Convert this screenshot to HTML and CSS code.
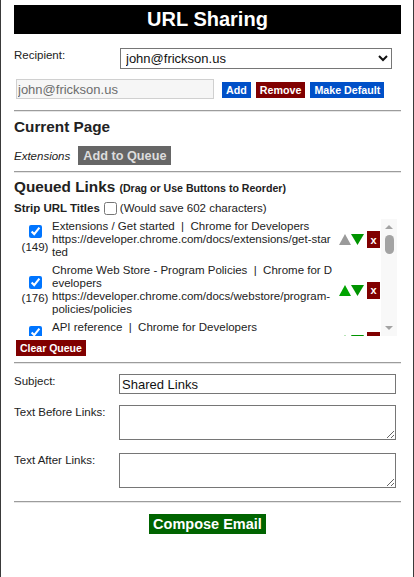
FILE: index.html
```html
<!DOCTYPE html>
<html>
<head>
<meta charset="utf-8">
<title>URL Sharing</title>
<link rel="stylesheet" href="styles.css">
</head>
<body>
<div class="page">
  <h1 class="title">URL Sharing</h1>

  <div class="recipient-row">
    <label class="lbl">Recipient:</label>
    <select class="sel"><option>john@frickson.us</option></select>
  </div>

  <div class="email-row">
    <input class="email" type="text" value="john@frickson.us" disabled>
    <button class="btn blue">Add</button>
    <button class="btn red">Remove</button>
    <button class="btn blue">Make Default</button>
  </div>

  <hr class="rule">

  <h2 class="section">Current Page</h2>
  <div class="current-row">
    <span class="page-name">Extensions</span>
    <button class="btn-queue">Add to Queue</button>
  </div>

  <hr class="rule r2">

  <h2 class="section q">Queued Links <span class="hint">(Drag or Use Buttons to Reorder)</span></h2>
  <div class="strip-row"><b>Strip URL Titles</b><input type="checkbox"><span>(Would save 602 characters)</span></div>

  <div class="list">
    <div class="list-body">
      <div class="item">
        <div class="chk"><input type="checkbox" checked><span class="count">(149)</span></div>
        <div class="txt">Extensions / Get started &nbsp;|&nbsp; Chrome for Developers<br>https://developer.chrome.com/docs/extensions/get-started</div>
        <div class="ctrls">
          <svg class="tri" width="12" height="11" viewBox="0 0 12 11"><polygon points="6,0 12,11 0,11" fill="#9a9a9a"/></svg>
          <svg class="tri" width="13" height="11" viewBox="0 0 13 11"><polygon points="0,0 13,0 6.5,11" fill="#009400"/></svg>
          <span class="del">x</span>
        </div>
      </div>
      <div class="item">
        <div class="chk"><input type="checkbox" checked><span class="count">(176)</span></div>
        <div class="txt">Chrome Web Store - Program Policies &nbsp;|&nbsp; Chrome for Developers<br>https://developer.chrome.com/docs/webstore/program-policies/policies</div>
        <div class="ctrls">
          <svg class="tri" width="12" height="11" viewBox="0 0 12 11"><polygon points="6,0 12,11 0,11" fill="#00a400"/></svg>
          <svg class="tri" width="13" height="11" viewBox="0 0 13 11"><polygon points="0,0 13,0 6.5,11" fill="#009400"/></svg>
          <span class="del">x</span>
        </div>
      </div>
      <div class="item">
        <div class="chk"><input type="checkbox" checked><span class="count">(121)</span></div>
        <div class="txt">API reference &nbsp;|&nbsp; Chrome for Developers<br>https://developer.chrome.com/docs/extensions/reference/api</div>
        <div class="ctrls">
          <svg class="tri" width="12" height="11" viewBox="0 0 12 11"><polygon points="6,0 12,11 0,11" fill="#00a400"/></svg>
          <svg class="tri" width="13" height="11" viewBox="0 0 13 11"><polygon points="0,0 13,0 6.5,11" fill="#009400"/></svg>
          <span class="del">x</span>
        </div>
      </div>
    </div>
    <div class="sbar">
      <span class="sb-up"></span>
      <span class="sb-thumb"></span>
      <span class="sb-space"></span>
      <span class="sb-down"></span>
    </div>
  </div>

  <div class="clear-wrap"><button class="btn-clear">Clear Queue</button></div>

  <hr class="rule r3">

  <div class="form">
    <div class="frow">
      <label class="flbl">Subject:</label>
      <input class="subject" type="text" value="Shared Links">
    </div>
    <div class="frow f2">
      <label class="flbl">Text Before Links:</label>
      <textarea class="area"></textarea>
    </div>
    <div class="frow f3">
      <label class="flbl">Text After Links:</label>
      <textarea class="area"></textarea>
    </div>
  </div>

  <hr class="rule r4">

  <div class="compose-wrap"><button class="compose">Compose Email</button></div>
</div>
</body>
</html>
```

FILE: styles.css
```css
html, body {
  margin: 0;
  padding: 0;
}

body {
  font-family: "Liberation Sans", Arial, sans-serif;
  font-size: 11.5px;
  color: #222;
  background: #fff;
  border-left: 1px solid #3a3a3a;
  border-right: 1px solid #3a3a3a;
  height: 577px;
  box-sizing: border-box;
  overflow: hidden;
}

.page {
  padding: 5px 12px 0 13px;
}

.title {
  margin: 0;
  background: #000;
  color: #fff;
  font-size: 20px;
  font-weight: bold;
  text-align: center;
  height: 29px;
  line-height: 29px;
}

.recipient-row {
  display: flex;
  align-items: flex-start;
  margin-top: 14px;
}

.lbl {
  width: 106px;
  line-height: 14px;
}

.sel {
  width: 272px;
  height: 21px;
  font: 13px "Liberation Sans", Arial, sans-serif;
  color: #111;
  border: 1px solid #767676;
  border-radius: 0;
  background: #fff;
  padding: 0 1px;
  margin: 0;
}

.email-row {
  display: flex;
  align-items: center;
  margin-top: 10px;
  padding-left: 2px;
}

.email {
  width: 198px;
  height: 20px;
  box-sizing: border-box;
  font: 13px "Liberation Sans", Arial, sans-serif;
  color: #6d6d6d;
  background: #f6f6f6;
  border: 1px solid #d0d0d0;
  border-radius: 0;
  padding: 0 1px;
  margin: 0 8px 0 0;
}

.btn {
  font: bold 10.7px "Liberation Sans", Arial, sans-serif;
  color: #fff;
  border: 0;
  border-radius: 0;
  height: 16px;
  padding: 0 4px;
  margin: 1px 5px 0 0;
}

.blue { background: #0050c8; }
.red { background: #800000; }

.rule {
  border: 0;
  border-top: 1px solid #9c9c9c;
  border-bottom: 1px solid #e6e6e6;
  height: 0;
  margin: 11px 0 0;
}

.section {
  font-size: 15.3px;
  font-weight: bold;
  line-height: 18px;
  margin: 6px 0 0;
}

.current-row {
  display: flex;
  align-items: center;
  margin-top: 10px;
  height: 19px;
}

.page-name {
  font-style: italic;
  margin-right: 8px;
}

.btn-queue {
  font: bold 12.7px "Liberation Sans", Arial, sans-serif;
  background: #666;
  color: #ddd;
  border: 0;
  border-radius: 0;
  height: 19px;
  padding: 0 5px;
  margin: 0;
}

.r2 { margin-top: 6px; }
.q { margin-top: 5px; }

.hint {
  font-size: 10.6px;
  font-weight: bold;
}

.strip-row {
  display: flex;
  align-items: center;
  margin-top: 4px;
  line-height: 14px;
}

.strip-row input {
  width: 13px;
  height: 13px;
  margin: 0 3px 0 4px;
}

.list {
  display: flex;
  margin-top: 4px;
  width: 383px;
  height: 117px;
}

.list-body {
  flex: 1;
  overflow: hidden;
  padding-top: 1px;
}

.sbar {
  width: 16px;
  background: #f8f8f8;
  display: flex;
  flex-direction: column;
  align-items: center;
}

.sb-up {
  width: 0;
  height: 0;
  margin-top: 6px;
  border-left: 4.5px solid transparent;
  border-right: 4.5px solid transparent;
  border-bottom: 4.5px solid #a3a3a3;
}

.sb-thumb {
  width: 9px;
  height: 19px;
  margin-top: 6px;
  border-radius: 4.5px;
  background: #a3a3a3;
}

.sb-space {
  flex: 1;
}

.sb-down {
  width: 0;
  height: 0;
  margin-bottom: 6px;
  border-left: 4.5px solid transparent;
  border-right: 4.5px solid transparent;
  border-top: 4.5px solid #a3a3a3;
}

.item {
  display: flex;
  align-items: center;
  padding-left: 5px;
  margin-bottom: 5px;
}

.chk {
  width: 32px;
  display: flex;
  flex-direction: column;
  align-items: center;
}

.chk input {
  width: 13px;
  height: 13px;
  margin: 0 0 3px;
}

.count {
  line-height: 13px;
}

.txt {
  width: 281px;
  margin-left: 1px;
  line-height: 13px;
  word-break: break-all;
}

.ctrls {
  display: flex;
  align-items: center;
  margin-left: 6px;
}

.tri {
  display: block;
}

.del {
  width: 13px;
  height: 17px;
  margin-left: 3px;
  background: #800000;
  color: #fff;
  font-weight: bold;
  font-size: 11px;
  display: flex;
  align-items: center;
  justify-content: center;
}

.clear-wrap {
  margin-top: 4px;
  padding-left: 2px;
}

.btn-clear {
  display: block;
  font: bold 10.5px "Liberation Sans", Arial, sans-serif;
  background: #800000;
  color: #fff;
  border: 0;
  border-radius: 0;
  height: 16px;
  padding: 0 4px;
  margin: 0;
}

.r3 { margin-top: 6px; }

.form {
  margin-top: 10px;
}

.frow {
  display: flex;
  align-items: flex-start;
}

.f2 { margin-top: 11px; }
.f3 { margin-top: 13px; }

.flbl {
  width: 105px;
  line-height: 14px;
}

.subject {
  width: 277px;
  height: 20px;
  box-sizing: border-box;
  font: 13px "Liberation Sans", Arial, sans-serif;
  color: #111;
  border: 1px solid #767676;
  border-radius: 0;
  padding: 0 2px;
  margin: 0;
}

.area {
  width: 277px;
  height: 35px;
  box-sizing: border-box;
  border: 1px solid #767676;
  border-radius: 0;
  margin: 0;
  padding: 2px;
  font: 13px "Liberation Sans", Arial, sans-serif;
}

.r4 { margin-top: 13px; }

.compose-wrap {
  margin-top: 11px;
  text-align: center;
}

.compose {
  font: bold 14.5px "Liberation Sans", Arial, sans-serif;
  background: #006400;
  color: #fff;
  border: 0;
  border-radius: 0;
  height: 20px;
  padding: 0 4px;
  margin: 0;
}
```
